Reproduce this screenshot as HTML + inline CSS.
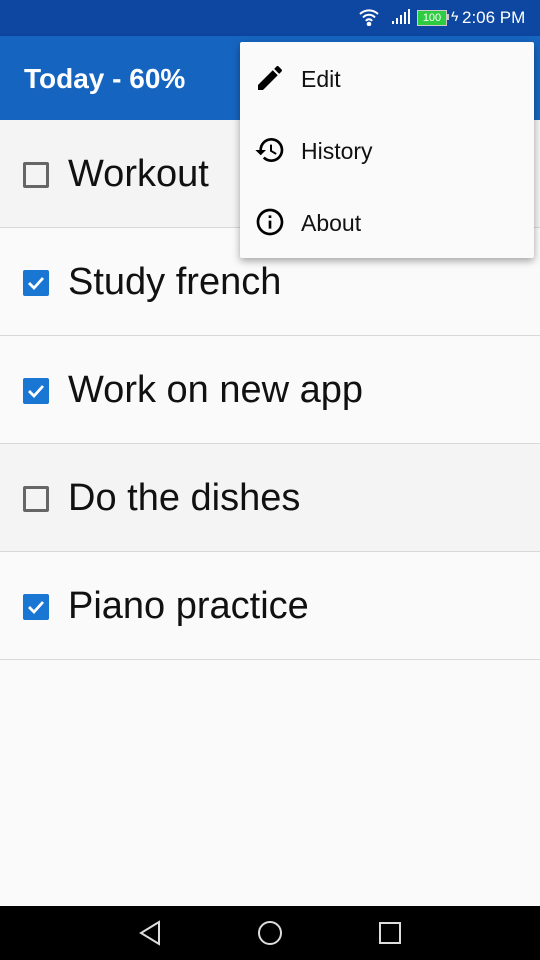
<!DOCTYPE html>
<html><head><style>
body{margin:0;width:540px;height:960px;background:#fafafa;font-family:"Liberation Sans",sans-serif;position:relative;overflow:hidden}
.sb{position:absolute;top:0;left:0;width:540px;height:36px;background:#0d47a1;color:#fff}
.ab{position:absolute;top:36px;left:0;width:540px;height:84px;background:#1565c0;box-shadow:0 2px 4px rgba(0,0,0,.3)}
.ab span{position:absolute;left:24px;top:27px;color:#fff;font-size:28px;font-weight:bold}
.row{position:absolute;left:0;width:540px;height:107px;border-bottom:1px solid #d8d8d8}
.row .t{position:absolute;left:68px;top:33px;font-size:38px;color:#111}
.cb{position:absolute;left:23px;top:42px;width:26px;height:26px;box-sizing:border-box;border-radius:2px}
.un{border:3px solid #666}
.ck{background:#1976d2}
.menu{position:absolute;left:240px;top:42px;width:294px;height:216px;background:#fafafa;box-shadow:0 3px 8px rgba(0,0,0,.35);border-radius:2px}
.mi{position:absolute;left:61px;font-size:23px;color:#111}
.nav{position:absolute;top:906px;left:0;width:540px;height:54px;background:#000}
</style></head><body>
<div class="sb">
<svg style="position:absolute;left:358px;top:8px" width="22" height="18" viewBox="0 0 22 18" fill="none" stroke="#fff" stroke-width="2"><path d="M2 6a13 13 0 0 1 18 0M5 9.5a8 8 0 0 1 12 0M8 13a3.5 3.5 0 0 1 6 0"/><circle cx="11" cy="16" r="1.3" fill="#fff"/></svg>
<svg style="position:absolute;left:392px;top:9px" width="18" height="16"><rect x="0" y="12" width="2" height="3" fill="#fff"/><rect x="4" y="9" width="2" height="6" fill="#fff"/><rect x="8" y="6" width="2" height="9" fill="#fff"/><rect x="12" y="3" width="2" height="12" fill="#fff"/><rect x="16" y="0" width="2" height="15" fill="#fff"/></svg>
<div style="position:absolute;left:417px;top:10px;width:28px;height:14px;border:1px solid #ccc;background:#2ecc40;font-size:11px;line-height:14px;text-align:center;color:#fff">100</div>
<div style="position:absolute;left:447px;top:14px;width:2px;height:6px;background:#ccc"></div>
<div style="position:absolute;left:451px;top:8px;font-size:14px">ϟ</div>
<div style="position:absolute;left:462px;top:8px;font-size:17px">2:06 PM</div>
</div>
<div class="ab"><span>Today - 60%</span></div>
<div class="row" style="top:120px;background:#f4f4f4"><div class="cb un"></div><div class="t">Workout</div></div>
<div class="row" style="top:228px"><div class="cb ck"><svg width="26" height="26"><path d="M6 13l5 5 9-10" stroke="#fff" stroke-width="2.8" fill="none"/></svg></div><div class="t">Study french</div></div>
<div class="row" style="top:336px"><div class="cb ck"><svg width="26" height="26"><path d="M6 13l5 5 9-10" stroke="#fff" stroke-width="2.8" fill="none"/></svg></div><div class="t">Work on new app</div></div>
<div class="row" style="top:444px;background:#f4f4f4"><div class="cb un"></div><div class="t">Do the dishes</div></div>
<div class="row" style="top:552px"><div class="cb ck"><svg width="26" height="26"><path d="M6 13l5 5 9-10" stroke="#fff" stroke-width="2.8" fill="none"/></svg></div><div class="t">Piano practice</div></div>
<div class="menu">
<svg style="position:absolute;left:14px;top:20px" width="32" height="32" viewBox="0 0 24 24"><path d="M3 17.25V21h3.75L17.81 9.94l-3.75-3.75L3 17.25zM20.71 7.04a1 1 0 0 0 0-1.41l-2.34-2.34a1 1 0 0 0-1.41 0l-1.83 1.83 3.75 3.75 1.83-1.83z"/></svg>
<div class="mi" style="top:24px">Edit</div>
<svg style="position:absolute;left:14px;top:92px" width="32" height="32" viewBox="0 0 24 24"><path d="M13 3a9 9 0 0 0-9 9H1l3.89 3.89.07.14L9 12H6c0-3.870 3.13-7 7-7s7 3.13 7 7-3.13 7-7 7c-1.93 0-3.68-.79-4.94-2.06l-1.42 1.420A8.950 8.950 0 0 0 13 21a9 9 0 0 0 0-18zm-1 5v5l4.28 2.54.72-1.21-3.5-2.08V8H12z"/></svg>
<div class="mi" style="top:96px">History</div>
<svg style="position:absolute;left:14px;top:164px" width="32" height="32" viewBox="0 0 24 24"><path d="M11 7h2v2h-2zm0 4h2v6h-2zm1-9C6.48 2 2 6.48 2 12s4.48 10 10 10 10-4.48 10-10S17.52 2 12 2zm0 18c-4.41 0-8-3.59-8-8s3.59-8 8-8 8 3.59 8 8-3.590 8-8 8z"/></svg>
<div class="mi" style="top:168px">About</div>
</div>
<div class="nav">
<svg style="position:absolute;left:138px;top:14px" width="26" height="26" fill="none" stroke="#ddd" stroke-width="2"><path d="M21 2L3 13l18 11z"/></svg>
<svg style="position:absolute;left:257px;top:14px" width="26" height="26" fill="none" stroke="#ddd" stroke-width="2"><circle cx="13" cy="13" r="11"/></svg>
<svg style="position:absolute;left:378px;top:15px" width="24" height="24" fill="none" stroke="#ddd" stroke-width="2"><rect x="2" y="2" width="20" height="20"/></svg>
</div>
</body></html>
